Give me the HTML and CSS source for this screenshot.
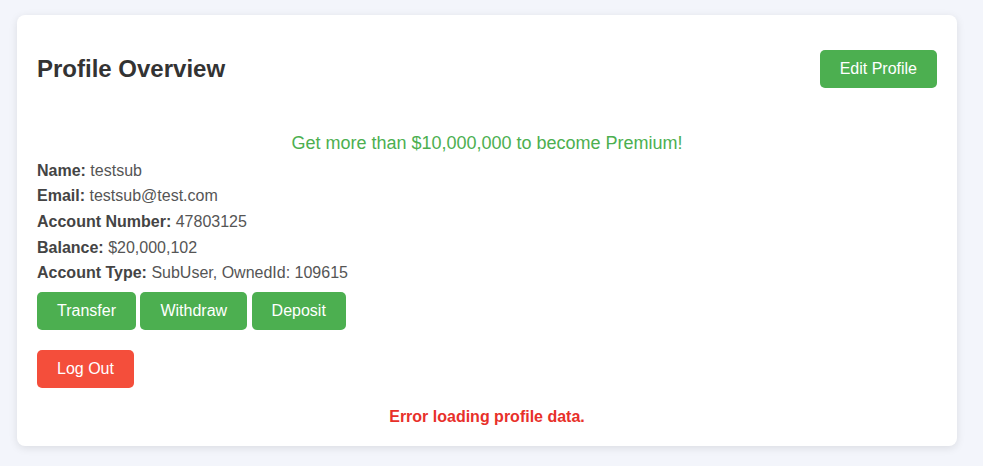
FILE: index.html
```html
<!DOCTYPE html>
<html lang="en">
<head>
  <meta charset="UTF-8" />
  <meta name="viewport" content="width=device-width, initial-scale=1.0"/>
  <title>Profile Overview</title>
  <link rel="stylesheet" href="styles.css">
</head>
<body>
  <div class="container">
    <div class="header">
      <h2>Profile Overview</h2>
      <button class="btn">Edit Profile</button>
    </div>

    <p class="promo">Get more than $10,000,000 to become Premium!</p>

    <div class="details">
      <p><strong>Name:</strong> testsub</p>
      <p><strong>Email:</strong> testsub@test.com</p>
      <p><strong>Account Number:</strong> 47803125</p>
      <p><strong>Balance:</strong> $20,000,102</p>
      <p><strong>Account Type:</strong> SubUser, OwnedId: 109615</p>
    </div>

    <div class="actions">
      <button class="btn">Transfer</button>
      <button class="btn">Withdraw</button>
      <button class="btn">Deposit</button>
    </div>

    <div class="logout">
      <button class="btn btn-red">Log Out</button>
    </div>

    <p class="error">Error loading profile data.</p>
  </div>
</body>
</html>
```

FILE: styles.css
```css
body {
  font-family: "Liberation Sans", Arial, sans-serif;
  background-color: #f3f5fb;
  margin: 0;
  padding: 15px 17px;
}
.container {
  background: white;
  width: 940px;
  box-sizing: border-box;
  padding: 0 20px 20px;
  border-radius: 8px;
  box-shadow: 0 2px 8px rgba(0, 0, 0, 0.1);
}
.header {
  display: flex;
  justify-content: space-between;
  align-items: center;
  padding-top: 20px;
}
h2 {
  color: #333;
  font-size: 24px;
  margin: 20px 0;
}
.btn {
  font-family: inherit;
  font-size: 16px;
  padding: 10px 20px;
  background-color: #4caf50;
  color: white;
  border: none;
  border-radius: 5px;
  cursor: pointer;
}
.btn:hover {
  background-color: #45a049;
}
.btn-red {
  background-color: #f44e3b;
}
.btn-red:hover {
  background-color: #e53935;
}
.promo {
  text-align: center;
  color: #4caf50;
  font-size: 18px;
  line-height: 1.6;
  margin: 26px 0 0;
}
.details p {
  margin: 0;
  font-size: 16px;
  line-height: 1.6;
  color: #555;
}
.details strong {
  color: #444;
}
.actions {
  margin-top: 6px;
}
.logout {
  margin-top: 20px;
}
.error {
  text-align: center;
  color: #e8302a;
  font-weight: bold;
  font-size: 16px;
  margin: 20px 0 0;
}
```
